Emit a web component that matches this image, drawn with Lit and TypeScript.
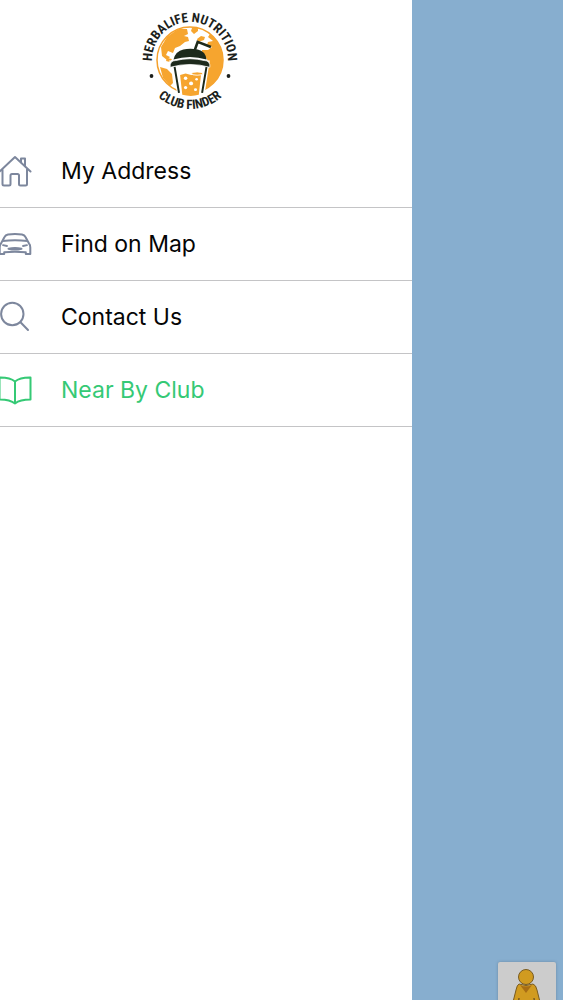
import { LitElement, html, css, svg } from "lit";
import { customElement, property, state } from "lit/decorators.js";
import { classMap } from "lit/directives/class-map.js";

const icons = {
  home: svg`<path d="M-1 17 15 2l15.500 14.500M2.500 14.500v14.500q0 1.500 1.500 1.500h5q1.500 0 1.500-1.500v-8.500q0-1.500 1.500-1.500h5.500q1.500 0 1.500 1.500v8.500q0 1.500 1.500 1.500h5q1.500 0 1.500-1.500V14.500M21 7V3.500h4v8"/>`,
  car: svg`<path d="M1 15.500 4.500 9q1-2 3.500-2.400Q15 5.400 22 6.600q2.500.4 3.500 2.400l3.500 6.500q1.300 1.300 1.300 4V26h-4.500v-1.700q-11-.9-21.600 0V26H-.3v-6.500q0-2.700 1.300-4ZM2.500 13q12.500-1.300 25 0"/><path d="M3 17.200l4 .8M27 17.200l-4 .8" stroke-width="1.800"/><path d="M8.500 20.700q6.500-1.200 13 0-6.500 1.700-13 0Z" fill="currentColor"/>`,
  search: svg`<circle cx="12.300" cy="13" r="11.200"/><path d="m20.500 21.300 7.500 7.700"/>`,
  book: svg`<path d="M15 7.500Q10 3.300-.5 3.500v22Q10 25.500 15 29.500q5-4 15.500-4v-22Q20 3.300 15 7.500v22"/>`,
};

type IconName = keyof typeof icons;

interface MenuEntry {
  label: string;
  icon: IconName;
}

@customElement("club-logo")
class ClubLogo extends LitElement {
  static styles = css`
    :host { display: block; }
    svg { display: block; width: 100px; height: 104px; overflow: visible; }
    text {
      font-family: "Roboto Condensed", "Roboto", sans-serif;
      font-size: 13px;
      font-weight: 700;
      fill: #1c1f1c;
      text-anchor: middle;
    }
  `;

  render() {
    return html`
      <svg viewBox="0 0 100 104" role="img" aria-label="Herbalife Nutrition Club Finder">
        <defs>
          <path id="top" d="M12 50A38 38 0 0 1 88 50"/>
          <path id="bottom" d="M2 51A48 48 0 0 0 98 51"/>
          <clipPath id="globe"><circle cx="50" cy="50" r="33"/></clipPath>
        </defs>
        <circle cx="50" cy="50" r="33" fill="#fff" stroke="#f5a12c" stroke-width="1.500"/>
        <g clip-path="url(#globe)" fill="#f6a52f">
          <path d="M21 37 27 27 38 19l9 0 1 5-4 2 4 1 1 4-4 1-5 4-5 2-2 5-5-2-2 4 4 2-3 3-5-4Z"/>
          <path d="m52 18 6 0 0 3-4 3-3-3ZM70 24l4 0 8 12 2 12v14l-9 12-8 7-4-1 4-22 2-3-2-6-5-5 0-4 6 0 4-3-5-2 1-3 5-1-5-4ZM57 29l4-3 4 1-1 3-6 2Z"/>
          <path d="m27 48 5 1-2 3-4-1ZM20 57l7 2 5 5 1 9-3 3-7-8Z"/>
        </g>
        <g transform="translate(-1.700 -2.500) scale(1.100 1.040)">
          <path d="M28 51h37l-5 34H36Z" fill="#fff"/>
          <path d="m38 65 5-1.500 5 1.500h9l-2 19q-7 2-15 0Z" fill="#f6a52f"/>
          <g fill="#fff"><circle cx="43" cy="68" r="1.600"/><circle cx="48" cy="73" r="1.800"/><circle cx="53" cy="69" r="1.200"/><circle cx="43" cy="77" r="1.500"/><circle cx="52" cy="79" r="1.400"/></g>
          <ellipse cx="53.500" cy="63.500" rx="5" ry="1.600" fill="#f6a52f" stroke="#fff" stroke-width=".8"/>
          <path d="M33 57 37 82M62 57 58 82" fill="none" stroke="#1d2a1c" stroke-width="1.800"/>
          <path d="M32 50q2-8 9-9.500 6-1.500 13 0 7 1.500 8 9.500Q47 45 32 50Z" fill="#1d2a1c"/>
          <path d="M29 55q1-4 5-4 13-3.500 26 0 4 0 5 4v2.500q-18-5.500-36 0Z" fill="#1d2a1c" stroke="#fff" stroke-width=".7"/>
          <path d="m51 42 3-9 12 5" fill="none" stroke="#1d2a1c" stroke-width="2.400"/>
        </g>
        <circle cx="11.500" cy="66" r="1.900" fill="#1c1f1c"/>
        <circle cx="88.500" cy="66" r="1.900" fill="#1c1f1c"/>
        <text><textPath href="#top" startOffset="50%">HERBALIFE NUTRITION</textPath></text>
        <text><textPath href="#bottom" startOffset="50%">CLUB FINDER</textPath></text>
      </svg>
    `;
  }
}

@customElement("menu-item")
class MenuItem extends LitElement {
  @property() label = "";
  @property() icon: IconName = "home";
  @property({ type: Boolean }) active = false;

  static styles = css`
    :host { display: block; border-bottom: 1px solid #c4c4c6; }
    .link {
      display: flex;
      align-items: center;
      gap: 29px;
      height: 72px;
      color: #050505;
      text-decoration: none;
      font-size: 23px;
      line-height: 32px;
    }
    .icon {
      flex: none;
      width: 32px;
      height: 32px;
      color: #7d879d;
      fill: none;
      stroke: currentColor;
      stroke-width: 2;
      stroke-linecap: round;
      stroke-linejoin: round;
    }
    .active, .active .icon { color: #35c975; }
  `;

  render() {
    return html`
      <a href="#" class=${classMap({ link: true, active: this.active })}>
        <svg class="icon" viewBox="0 0 32 32" aria-hidden="true">${icons[this.icon]}</svg>
        <span>${this.label}</span>
      </a>
    `;
  }
}

@customElement("app-root")
class AppRoot extends LitElement {
  @state() private selected = "Near By Club";

  private entries: MenuEntry[] = [
    { label: "My Address", icon: "home" },
    { label: "Find on Map", icon: "car" },
    { label: "Contact Us", icon: "search" },
    { label: "Near By Club", icon: "book" },
  ];

  static styles = css`
    :host {
      display: grid;
      grid-template-columns: 412fr 151fr;
      min-height: 100vh;
      background: #fff;
      font-family: "Inter", "Liberation Sans", sans-serif;
    }
    .header {
      display: flex;
      justify-content: center;
      padding: 10px 32px 21px 0;
    }
    .map {
      position: relative;
      overflow: hidden;
      background: #87aecf;
    }
    .pegman {
      position: absolute;
      right: 7px;
      bottom: -20px;
      width: 58px;
      height: 58px;
      padding: 0;
      border: 0;
      border-radius: 2px;
      background: #ccc;
      box-shadow: 0 0 3px rgba(60, 80, 100, 0.4);
    }
    .pegman svg { display: block; }
  `;

  render() {
    return html`
      <aside>
        <div class="header"><club-logo></club-logo></div>
        <nav>
          ${this.entries.map(
            (e) => html`<menu-item
              .label=${e.label}
              .icon=${e.icon}
              .active=${e.label === this.selected}
              @click=${() => (this.selected = e.label)}
            ></menu-item>`
          )}
        </nav>
      </aside>
      <main class="map">
        <button class="pegman" aria-label="Street View">
          <svg width="58" height="58" viewBox="0 0 58 58" aria-hidden="true">
            <path d="M21 22q7 3 14 0 3 1 4 6l3 12-4 2-2-6-1 18H22l-1-18-2 6-4-2 3-12q1-5 3-6Z" fill="#d19b20" stroke="#795b20"/>
            <path d="M22 23q6 3 12 0l-6 8Z" fill="#a86d14"/>
            <circle cx="28" cy="15" r="7.500" fill="#d19b20" stroke="#795b20"/>
          </svg>
        </button>
      </main>
    `;
  }
}
